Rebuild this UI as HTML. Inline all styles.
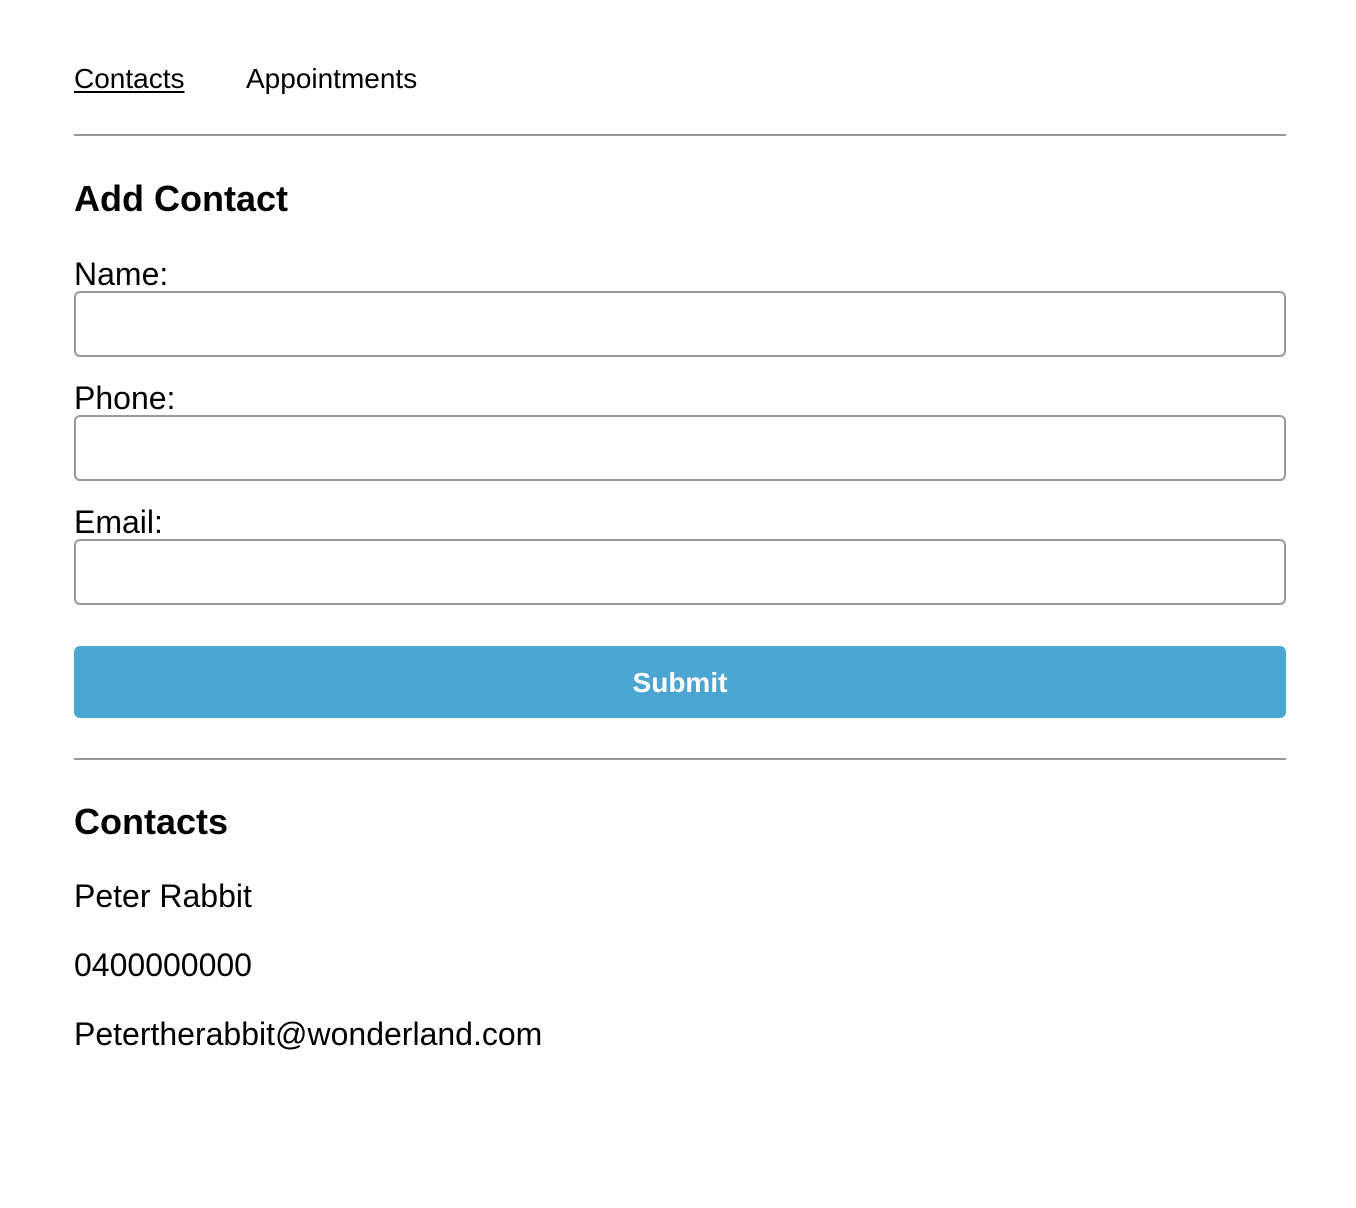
<!DOCTYPE html>
<html><head><meta charset="utf-8"><style>
body{margin:0;width:1356px;height:1208px;background:#fff;font-family:"Liberation Sans",Arial,sans-serif;color:#000;position:relative;overflow:hidden}
.a{position:absolute;white-space:nowrap}
.n{font-size:28px;line-height:28px}
.l{font-size:32px;line-height:32px;left:74px}
.h{font-size:36px;line-height:36px;font-weight:bold;left:74px}
.hr{position:absolute;left:74px;width:1212px;height:2px;background:#999}
.in{position:absolute;left:74px;width:1212px;height:66px;box-sizing:border-box;border:2px solid #999;border-radius:6px}
.btn{position:absolute;left:74px;top:646px;width:1212px;height:72px;background:#4aa5d3;border-radius:6px;color:#fff;font-weight:bold;font-size:28px;line-height:74px;text-align:center}
</style></head><body>
<div class="a n" style="left:74px;top:65px;text-decoration:underline;text-underline-offset:3px">Contacts</div>
<div class="a n" style="left:246px;top:65px">Appointments</div>
<div class="hr" style="top:134px"></div>
<div class="a h" style="top:181px">Add Contact</div>
<div class="a l" style="top:258px">Name:</div>
<div class="in" style="top:291px"></div>
<div class="a l" style="top:382px">Phone:</div>
<div class="in" style="top:415px"></div>
<div class="a l" style="top:506px">Email:</div>
<div class="in" style="top:539px"></div>
<div class="btn">Submit</div>
<div class="hr" style="top:758px"></div>
<div class="a h" style="top:804px">Contacts</div>
<div class="a l" style="top:880px">Peter Rabbit</div>
<div class="a l" style="top:949px">0400000000</div>
<div class="a l" style="top:1018px">Petertherabbit@wonderland.com</div>
</body></html>
